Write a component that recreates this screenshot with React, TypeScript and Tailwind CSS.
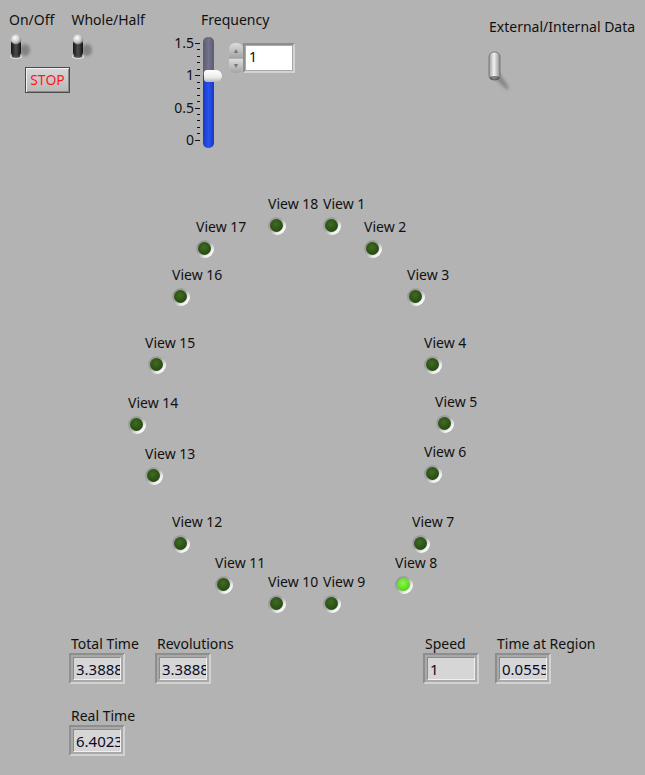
import type { ReactNode } from "react"

type View = { name: string; x: number; y: number; dx?: number; on?: boolean }

// x = label left edge, y = label top; LED sits just below its label (dx = extra LED indent)
const views: View[] = [
  { name: "View 18", x: 268, y: 195 },
  { name: "View 1", x: 323, y: 195 },
  { name: "View 2", x: 364, y: 218 },
  { name: "View 17", x: 196, y: 218 },
  { name: "View 3", x: 407, y: 266 },
  { name: "View 16", x: 172, y: 266 },
  { name: "View 4", x: 424, y: 334 },
  { name: "View 15", x: 145, y: 334, dx: 3 },
  { name: "View 5", x: 435, y: 393, dx: 1 },
  { name: "View 14", x: 128, y: 394 },
  { name: "View 6", x: 424, y: 443 },
  { name: "View 13", x: 145, y: 445 },
  { name: "View 7", x: 412, y: 513 },
  { name: "View 12", x: 172, y: 513 },
  { name: "View 8", x: 395, y: 554, on: true },
  { name: "View 11", x: 215, y: 554 },
  { name: "View 10", x: 268, y: 573 },
  { name: "View 9", x: 323, y: 573 },
]

const label = "whitespace-nowrap text-[14px] leading-[18px] text-[#111]"

function Led({ on, dx = 0 }: { on?: boolean; dx?: number }) {
  return (
    <div
      className="relative h-[18px] w-[18px] rounded-full bg-[linear-gradient(135deg,#8c8c8c_0%,#a8a8a8_45%,#f4f4f4_75%,#ffffff_100%)]"
      style={{ marginLeft: dx }}
    >
      <div
        className={
          on
            ? "absolute left-[2px] top-[2px] h-[13px] w-[13px] rounded-full bg-[radial-gradient(circle_at_45%_40%,#8cf552_0%,#5fe01e_55%,#3fae10_100%)]"
            : "absolute left-[2px] top-[2px] h-[13px] w-[13px] rounded-full bg-[radial-gradient(circle_at_45%_40%,#3f6b22_0%,#2c5216_55%,#1c3a0b_100%)]"
        }
      />
    </div>
  )
}

function DarkToggle() {
  return (
    <svg width="26" height="26" viewBox="0 0 26 26" className="ml-px">
      <defs>
        <linearGradient id="tbody" x1="0" x2="1">
          <stop offset="0" stopColor="#151515" />
          <stop offset="0.5" stopColor="#4d4d4d" />
          <stop offset="1" stopColor="#101010" />
        </linearGradient>
        <radialGradient id="tball" cx="0.4" cy="0.35" r="0.7">
          <stop offset="0" stopColor="#ffffff" />
          <stop offset="0.6" stopColor="#c8c8c8" />
          <stop offset="1" stopColor="#6e6e6e" />
        </radialGradient>
        <filter id="blur" x="-50%" y="-50%" width="200%" height="200%">
          <feGaussianBlur stdDeviation="1.6" />
        </filter>
      </defs>
      <ellipse cx="15" cy="16" rx="5" ry="6" fill="#6e6e6e" opacity="0.7" filter="url(#blur)" />
      <ellipse cx="6" cy="22.5" rx="6" ry="2.6" fill="#e2e2e2" />
      <ellipse cx="6" cy="22" rx="4.6" ry="1.8" fill="#4a4a4a" />
      <rect x="1" y="6" width="10" height="16" rx="4" fill="url(#tbody)" />
      <circle cx="6" cy="5.5" r="5" fill="url(#tball)" />
    </svg>
  )
}

function Indicator({ name, value }: { name: string; value: string }) {
  return (
    <div className="flex flex-col">
      <div className={`${label} pl-[2px]`}>{name}</div>
      <div className="h-[31px] w-[56px] border-2 border-t-[#8e8e8e] border-l-[#8e8e8e] border-r-[#d2d2d2] border-b-[#d2d2d2] bg-[#a9a9a9] p-[2px]">
        <div className="h-full w-full overflow-hidden border border-t-[#8a8a8a] border-l-[#8a8a8a] border-r-[#f0f0f0] border-b-[#f0f0f0] bg-[#d6d6d6] pl-[2px] text-[15px] leading-[22px] text-[#0a0a2a]">
          <span className="whitespace-nowrap">{value}</span>
        </div>
      </div>
    </div>
  )
}

function Panel({ x, y, children, className = "" }: { x: number; y: number; children: ReactNode; className?: string }) {
  return (
    <div className={`absolute ${className}`} style={{ left: x, top: y }}>
      {children}
    </div>
  )
}

export default function App() {
  const ticks = Array.from({ length: 16 }, (_, i) => i)
  return (
    <div
      className="relative h-[775px] w-[645px] overflow-hidden bg-[#b3b3b3]"
      style={{ fontFamily: '"Noto Sans", "Open Sans", sans-serif' }}
    >
      {/* top-left switches */}
      <Panel x={9} y={11} className="flex flex-col">
        <div className="flex gap-[17px]">
          <div className="flex flex-col gap-[5px]">
            <div className={label}>On/Off</div>
            <DarkToggle />
          </div>
          <div className="flex flex-col gap-[5px]">
            <div className={label}>Whole/Half</div>
            <DarkToggle />
          </div>
        </div>
        <div className="ml-[16px] mt-[7px] flex h-[26px] w-[45px] items-center justify-center border border-[#4a4a4a] bg-[linear-gradient(180deg,#d8d8d8,#b8b8b8)] shadow-[inset_1px_1px_0_#f2f2f2,inset_-1px_-1px_0_#8a8a8a] text-[14px] leading-none text-[#ff1a1a]">
          STOP
        </div>
      </Panel>

      {/* frequency slider */}
      <Panel x={174} y={11} className="flex flex-col">
        <div className={`${label} ml-[27px]`}>Frequency</div>
        <div className="mt-[8px] flex items-start">
          {/* scale numbers */}
          <div className="-mt-[3px] flex h-[115px] w-[20px] flex-col justify-between text-right text-[14px] leading-[18px] text-[#111]">
            <span>1.5</span>
            <span>1</span>
            <span>0.5</span>
            <span>0</span>
          </div>
          {/* ticks */}
          <div className="ml-px mt-[6px] flex h-[98px] w-[6px] flex-col justify-between">
            {ticks.map((i) => (
              <div key={i} className={i % 5 === 0 ? "h-px w-[5px] bg-[#111]" : "ml-[2px] h-px w-[3px] bg-[#111]"} />
            ))}
          </div>
          {/* track */}
          <div className="relative ml-[2px] h-[111px] w-[11px]">
            <div className="flex h-full w-full flex-col overflow-hidden rounded-[5px]">
              <div className="h-[39px] bg-[linear-gradient(90deg,#5b5b72,#72728a,#5b5b72)]" />
              <div className="flex-1 bg-[linear-gradient(90deg,#1838c8,#2a52ea,#1838c8)]" />
            </div>
            <div className="absolute left-[1px] top-[33px] h-[12px] w-[18px] rounded-l-[3px] rounded-r-[6px] bg-[linear-gradient(180deg,#ffffff,#ececec_60%,#b8b8b8)]" />
          </div>
          {/* numeric control */}
          <div className="ml-[15px] mt-[6px] flex">
            <div className="flex h-[30px] w-[14px] flex-col gap-px">
              <div className="flex flex-1 items-center justify-center rounded-t-[6px] bg-[linear-gradient(180deg,#dcdcdc,#a4a4a4)] text-[7px] leading-none text-[#777]">
                ▲
              </div>
              <div className="flex flex-1 items-center justify-center rounded-b-[6px] bg-[linear-gradient(180deg,#dcdcdc,#a4a4a4)] text-[7px] leading-none text-[#777]">
                ▼
              </div>
            </div>
            <div className="h-[30px] w-[52px] border-2 border-t-[#8e8e8e] border-l-[#8e8e8e] border-r-[#d2d2d2] border-b-[#d2d2d2] bg-[#a9a9a9] p-px">
              <div className="h-full w-full bg-white pl-[3px] text-[14px] leading-[22px] text-[#0a0a2a]">1</div>
            </div>
          </div>
        </div>
      </Panel>

      {/* external/internal */}
      <Panel x={489} y={18} className="flex flex-col">
        <div className={label}>External/Internal Data</div>
        <svg className="-ml-[3px] mt-[14px]" width="28" height="42" viewBox="0 0 28 42">
          <defs>
            <linearGradient id="ext" x1="0" x2="1">
              <stop offset="0" stopColor="#9a9a9a" />
              <stop offset="0.45" stopColor="#f2f2f2" />
              <stop offset="1" stopColor="#8e8e8e" />
            </linearGradient>
            <filter id="blur2" x="-50%" y="-50%" width="200%" height="200%">
              <feGaussianBlur stdDeviation="1.4" />
            </filter>
          </defs>
          <path d="M9 16 L22 36 Q24 40 20 39 L8 28 Z" fill="#6c6c6c" opacity="0.6" filter="url(#blur2)" />
          <rect x="3" y="2" width="11" height="28" rx="5" fill="url(#ext)" stroke="#6a6a6a" strokeWidth="0.8" />
          <ellipse cx="8.5" cy="28" rx="5" ry="2" fill="#3a3a3a" opacity="0.6" />
        </svg>
      </Panel>

      {/* views around the circle */}
      {views.map((v) => (
        <Panel key={v.name} x={v.x} y={v.y} className="flex flex-col gap-[4px]">
          <div className={label}>{v.name}</div>
          <Led on={v.on} dx={v.dx} />
        </Panel>
      ))}

      {/* indicators */}
      <Panel x={69} y={635} className="flex flex-col gap-[23px]">
        <div className="grid grid-cols-[86px_auto]">
          <Indicator name="Total Time" value="3.3888" />
          <Indicator name="Revolutions" value="3.3888" />
        </div>
        <Indicator name="Real Time" value="6.4023" />
      </Panel>
      <Panel x={423} y={635} className="grid grid-cols-[72px_auto]">
        <Indicator name="Speed" value="1" />
        <Indicator name="Time at Region" value="0.0555" />
      </Panel>
    </div>
  )
}
